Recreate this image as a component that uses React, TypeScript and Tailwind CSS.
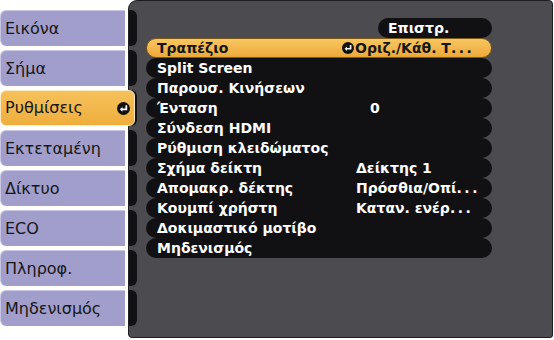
import React from "react";

const TABS = [
  "Εικόνα",
  "Σήμα",
  "Ρυθμίσεις",
  "Εκτεταμένη",
  "Δίκτυο",
  "ECO",
  "Πληροφ.",
  "Μηδενισμός",
];

const ACTIVE_TAB = 2;

const ROWS: { label: string; value?: string; pad?: string }[] = [
  { label: "Τραπέζιο", value: "Οριζ./Κάθ. Τ..." },
  { label: "Split Screen" },
  { label: "Παρουσ. Κινήσεων" },
  { label: "Ένταση", value: "0", pad: "pl-[14px]" },
  { label: "Σύνδεση HDMI" },
  { label: "Ρύθμιση κλειδώματος" },
  { label: "Σχήμα δείκτη", value: "Δείκτης 1" },
  { label: "Απομακρ. δέκτης", value: "Πρόσθια/Οπί..." },
  { label: "Κουμπί χρήστη", value: "Καταν. ενέρ..." },
  { label: "Δοκιμαστικό μοτίβο" },
  { label: "Μηδενισμός" },
];

// truncated values end in "...", drawn with wider dots like the OSD font
function Value({ text }: { text: string }) {
  if (!text.endsWith("...")) return <>{text}</>;
  return (
    <>
      {text.slice(0, -3)}
      <span className="tracking-[2.5px]">...</span>
    </>
  );
}

function EnterIcon({ className = "" }: { className?: string }) {
  return (
    <svg viewBox="0 0 12 12" className={className}>
      <circle cx="6" cy="6" r="6" fill="#111" />
      <path
        d="M8.6 3 V6.8 H4.2"
        fill="none"
        stroke="#fff"
        strokeWidth="1.6"
      />
      <path d="M2.6 6.8 L5 4.7 L5 8.9 Z" fill="#fff" />
    </svg>
  );
}

export default function App() {
  return (
    <div
      className="relative w-[554px] h-[340px] bg-white flex overflow-hidden"
      style={{ fontFamily: '"DejaVu Sans", Verdana, sans-serif' }}
    >
      {/* Tabs */}
      <div className="w-[128px] shrink-0 pt-[10px] flex flex-col gap-[4px] z-10">
        {TABS.map((t, i) =>
          i === ACTIVE_TAB ? (
            <div
              key={t}
              className="w-[135px] h-[36px] rounded-[6px] border border-[#fbe9c4] bg-gradient-to-b from-[#f6c15a] to-[#eeae3c] flex items-center pl-[4px] pr-[4px] justify-between text-[16px] text-[#161616]"
            >
              <span>{t}</span>
              <EnterIcon className="w-[13px] h-[13px]" />
            </div>
          ) : (
            <div
              key={t}
              className="w-[125px] h-[36px] rounded-l-[6px] border-t border-l border-[#c9c6e4] bg-[#a29ecb] flex items-center pl-[4px] text-[16px] text-[#161616]"
            >
              {t}
            </div>
          )
        )}
      </div>

      {/* Main panel */}
      <div className="h-[338px] w-[425px] bg-[#4b4b50] border border-[#1e1e22] rounded-tl-[9px] rounded-tr-[4px] rounded-bl-[4px] rounded-br-[3px] flex overflow-hidden">
        <div className="w-[8px] shrink-0 pt-[9px] flex flex-col gap-[4px]">
          {TABS.map((t) => (
            <div key={t} className="h-[36px] bg-[#111113] rounded-r-[6px]" />
          ))}
        </div>

        <div className="pl-[9px] pt-[17px] flex flex-col">
          <div className="flex justify-end w-[346px]">
            <div className="w-[114px] h-[20px] rounded-full bg-[#111113] text-white font-bold text-[14px] leading-[20px] pl-[10px]">
              Επιστρ.
            </div>
          </div>
          {ROWS.map((r, i) =>
            i === 0 ? (
              <div
                key={r.label}
                className="w-[346px] h-[20px] rounded-full border border-[#7a5a16] bg-gradient-to-b from-[#f8c660] to-[#eda93a] flex items-center text-[14px] font-bold text-[#151515] leading-[18px]"
              >
                <span className="pl-[10px] w-[195px]">{r.label}</span>
                <EnterIcon className="w-[12px] h-[12px]" />
                <span className="pl-[1px]">
                  <Value text={r.value ?? ""} />
                </span>
              </div>
            ) : (
              <div
                key={r.label}
                className="w-[346px] h-[20px] rounded-full bg-[#111113] flex items-center text-[14px] font-bold text-white leading-[20px]"
              >
                <span className="pl-[11px] w-[210px] shrink-0">{r.label}</span>
                {r.value && (
                  <span className={r.pad}>
                    <Value text={r.value} />
                  </span>
                )}
              </div>
            )
          )}
        </div>
      </div>
    </div>
  );
}
